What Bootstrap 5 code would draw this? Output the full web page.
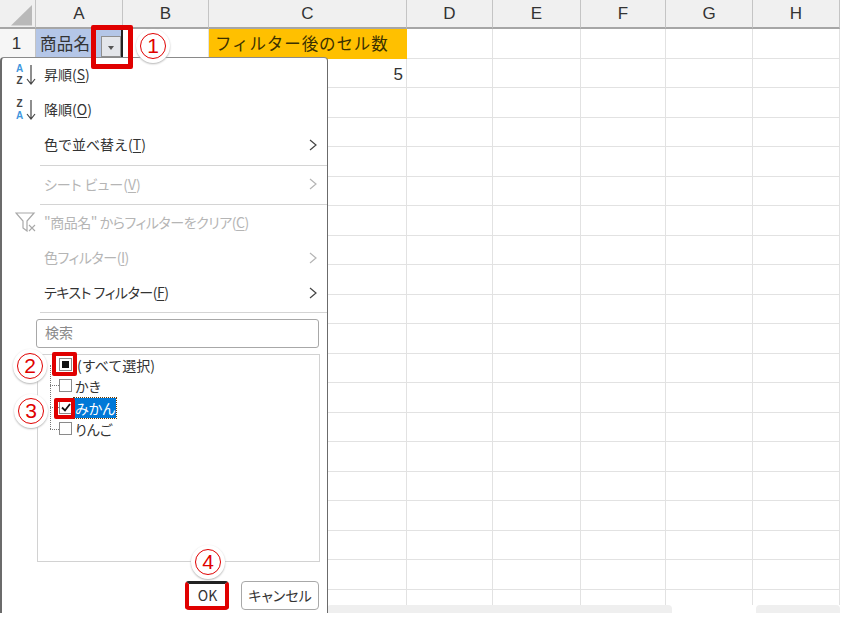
<!DOCTYPE html>
<html lang="ja">

<head>
    <meta charset="UTF-8" />
    <meta name="viewport" content="width=device-width, initial-scale=1.0" />
    <title>フィルター</title>
    <link href="https://cdn.jsdelivr.net/npm/bootstrap@5.3.0/dist/css/bootstrap.min.css" rel="stylesheet" />
    <style>
        body {
            background: #fff;
            font-family: "Noto Sans CJK JP", "Liberation Sans", sans-serif;
            overflow: hidden;
        }

        .stage {
            position: relative;
            width: 850px;
            height: 624px;
        }

        .sheet {
            display: grid;
            grid-template-columns: 36px 87px 86px 198px 86px 88px 85px 87px 87px;
            grid-template-rows: 29px;
            grid-auto-rows: 29.5px;
            width: 840px;
            height: 605px;
            overflow: hidden;
        }

        .hcell {
            background: #f0f0f0;
            border-right: 1px solid #c4c4c4;
            border-bottom: 2px solid #a6a6a6;
            color: #333;
            font: 17px "Liberation Sans", sans-serif;
            text-align: center;
            line-height: 27px;
        }

        .corner {
            position: relative;
            border-right: 1px solid #c4c4c4;
        }

        .corner svg {
            display: block;
        }

        .gcell {
            border-right: 1px solid #e2e2e2;
            border-bottom: 1px solid #e2e2e2;
            color: #333;
            font-size: 16px;
            line-height: 28px;
        }

        .rowhead {
            background: #f6f6f6;
            border-right: 1px solid #c4c4c4;
            font: 17px/30px "Liberation Sans", sans-serif;
            text-align: center;
            padding-right: 2px;
            color: #333;
        }

        .name-cell {
            background: #b4c6e7;
            border-right: 2px solid #222;
            padding-left: 4px;
            font-size: 16.5px;
            color: #333;
            letter-spacing: .3px;
            line-height: 29px;
        }

        .head-cell {
            background: #ffc000;
            border: 0;
            padding-left: 6px;
            font-size: 16.5px;
            letter-spacing: .9px;
            color: #3a3000;
            line-height: 29px;
        }

        .num-cell {
            font: 17px/31px "Liberation Sans", sans-serif;
            text-align: right;
            padding-right: 3px;
        }

        .filter-btn {
            position: absolute;
            left: 101px;
            top: 36px;
            width: 20px;
            height: 21px;
            background: #e4e6ea;
            border: 1px solid #8f8f8f;
        }

        .filter-btn::after {
            content: "";
            position: absolute;
            left: 6px;
            top: 9px;
            border: 3.5px solid transparent;
            border-top: 4px solid #555;
            border-bottom: 0;
        }

        .hscroll {
            height: 8px;
        }

        .thumb-a {
            width: 345px;
            margin-left: 327px;
        }

        .thumb-b {
            width: 84px;
            margin-left: 84px;
        }

        .thumb-a,
        .thumb-b {
            background: #efefef;
            border-radius: 4px 4px 0 0;
        }

        /* filter menu */
        .filter-menu.dropdown-menu {
            position: absolute;
            display: block;
            left: 0;
            top: 57px;
            width: 328px;
            height: 556px;
            min-width: 0;
            padding: 0;
            margin: 0;
            background: #fff;
            border: 0;
            border-left: 2px solid #6b6b6b;
            border-right: 1px solid #6b6b6b;
            border-top: 1px solid #8a8a8a;
            border-radius: 4px 4px 0 0;
            font-size: 14px;
        }

        .menu-row {
            display: flex;
            align-items: center;
            height: 35px;
            padding: 0 10px 2px 0;
            color: #333;
            white-space: nowrap;
        }

        .menu-row.tall {
            height: 36px;
        }

        .menu-row.off {
            color: #b5b5b5;
        }

        .menu-icon {
            flex: 0 0 42px;
            display: flex;
            padding-left: 13px;
            align-items: center;
        }

        .menu-label {
            flex: 1 1 auto;
        }

        .menu-label u {
            text-underline-offset: 2px;
        }

        .tight {
            font-feature-settings: "palt";
            letter-spacing: -.45px;
        }

        .kana {
            font-feature-settings: "palt";
        }

        .sort-letters {
            display: flex;
            flex-direction: column;
            font: bold 10px/11.5px "Liberation Sans", sans-serif;
            color: #444;
            width: 9px;
            margin-right: 2px;
            text-align: center;
        }

        .sort-letters b {
            color: #3f97de;
        }

        .menu-sep {
            height: 1px;
            margin: 1px 0 1px 38px;
            background: #d4d4d4;
        }

        .menu-sep.first {
            margin-top: 2px;
        }

        .menu-sep.flush {
            margin-bottom: 0;
        }

        .search-box.form-control {
            width: 283px;
            height: 29px;
            margin: 6px 0 0 34px;
            padding: 0 8px 3px;
            border: 1px solid #a8a8a8;
            border-radius: 3px;
            font-size: 14px;
            color: #777;
        }

        .search-box.form-control::placeholder {
            color: #8a8a8a;
        }

        .tree-box {
            position: relative;
            width: 283px;
            height: 208px;
            margin: 6px 0 0 35px;
            border: 1px solid #d2d2d2;
            font-size: 14px;
            color: #333;
        }

        .tree-row {
            position: absolute;
            left: 21px;
            height: 21px;
            display: flex;
            align-items: center;
            gap: 3px;
            line-height: 20px;
        }

        .tick {
            width: 13px;
            height: 13px;
            flex: none;
            background: #fff;
            border: 1px solid #8a8a8a;
            display: flex;
            align-items: center;
            justify-content: center;
        }

        .tick-mixed::after {
            content: "";
            width: 7px;
            height: 7px;
            background: #111;
        }

        .tick-label.all-label {
            margin-left: 2px;
        }

        .tick-label.picked {
            background: #0078d7;
            color: #fff;
            outline: 1px dotted #6b3b00;
            padding: 0 1px;
            margin-left: -1px;
        }

        .tree-line {
            position: absolute;
            border-color: #777;
            border-style: dotted;
            border-width: 0;
        }

        .tree-v {
            left: 12px;
            top: 10px;
            height: 64px;
            border-left-width: 1px;
        }

        .tree-h {
            left: 12px;
            width: 9px;
            border-top-width: 1px;
        }

        .menu-actions {
            display: flex;
            justify-content: flex-end;
            gap: 12px;
            margin: 19px 8px 0 0;
        }

        .menu-actions .btn {
            height: 29px;
            padding: 0;
            background: #fff;
            border: 1px solid #a8a8a8;
            border-radius: 4px;
            color: #333;
            font-size: 14px;
            line-height: 27px;
        }

        .ok-btn {
            width: 43px;
        }

        .cancel-btn {
            width: 78px;
            font-feature-settings: "palt";
        }

        /* red annotations */
        .red-frame {
            position: absolute;
            border: 5px solid #e00000;
            border-radius: 2px;
            z-index: 1100;
        }

        .frame-one {
            left: 91px;
            top: 25px;
            width: 42px;
            height: 44px;
        }

        .frame-two {
            left: 52px;
            top: 352px;
            width: 25px;
            height: 24px;
            border-width: 4px;
        }

        .frame-three {
            left: 54px;
            top: 398px;
            width: 21px;
            height: 21px;
            border-width: 4px;
        }

        .frame-four {
            left: 185px;
            top: 581px;
            width: 44px;
            height: 29px;
            border-width: 4px;
            border-top-width: 3px;
            border-top-color: #222;
            border-radius: 4px;
        }

        .callout {
            position: absolute;
            width: 34px;
            height: 34px;
            display: flex;
            align-items: center;
            justify-content: center;
            background: #fff;
            border-radius: 50%;
            box-shadow: 0 1px 2px #b5b5b5;
            z-index: 1101;
        }

        .callout span {
            width: 26px;
            height: 26px;
            border: 1.5px solid #e00000;
            border-radius: 50%;
            color: #e00000;
            text-align: center;
            font: 300 21px/23px "Liberation Sans", sans-serif;
        }
    </style>
</head>

<body>
    <div class="stage">
        <div class="sheet" id="sheet"></div>
        <div class="hscroll d-flex">
            <div class="thumb-a"></div>
            <div class="thumb-b"></div>
        </div>

        <div class="filter-btn"></div>

        <div class="filter-menu dropdown-menu">
            <div class="menu-row">
                <div class="menu-icon">
                    <div class="sort-letters"><b>A</b><span>Z</span></div>
                    <svg width="10" height="20" viewBox="0 0 10 20"><path d="M5 0V19M1 14l4 5 4-5" fill="none" stroke="#444" stroke-width="1.2"/></svg>
                </div>
                <div class="menu-label">昇順(<u>S</u>)</div>
            </div>
            <div class="menu-row">
                <div class="menu-icon">
                    <div class="sort-letters"><span>Z</span><b>A</b></div>
                    <svg width="10" height="20" viewBox="0 0 10 20"><path d="M5 0V19M1 14l4 5 4-5" fill="none" stroke="#444" stroke-width="1.2"/></svg>
                </div>
                <div class="menu-label">降順(<u>O</u>)</div>
            </div>
            <div class="menu-row">
                <div class="menu-icon"></div>
                <div class="menu-label">色で並べ替え(<u>T</u>)</div>
                <svg width="8" height="12" viewBox="0 0 8 12"><path d="M1 1l6 5-6 5" fill="none" stroke="#444" stroke-width="1.2"/></svg>
            </div>
            <div class="menu-sep first"></div>
            <div class="menu-row tall off">
                <div class="menu-icon"></div>
                <div class="menu-label kana">シート ビュー(<u>V</u>)</div>
                <svg width="8" height="12" viewBox="0 0 8 12"><path d="M1 1l6 5-6 5" fill="none" stroke="#b5b5b5" stroke-width="1.2"/></svg>
            </div>
            <div class="menu-sep flush"></div>
            <div class="menu-row tall off">
                <div class="menu-icon">
                    <svg width="22" height="20" viewBox="0 0 22 20"><path d="M1 1H19L12 9V19L8 16V9Z" fill="none" stroke="#a8a8a8" stroke-width="1.2"/><path d="M14 13l6 6M20 13l-6 6" stroke="#a8a8a8" stroke-width="1.1"/></svg>
                </div>
                <div class="menu-label tight">"商品名" からフィルターをクリア(<u>C</u>)</div>
            </div>
            <div class="menu-row off">
                <div class="menu-icon"></div>
                <div class="menu-label tight">色フィルター(<u>I</u>)</div>
                <svg width="8" height="12" viewBox="0 0 8 12"><path d="M1 1l6 5-6 5" fill="none" stroke="#b5b5b5" stroke-width="1.2"/></svg>
            </div>
            <div class="menu-row">
                <div class="menu-icon"></div>
                <div class="menu-label tight">テキスト フィルター(<u>F</u>)</div>
                <svg width="8" height="12" viewBox="0 0 8 12"><path d="M1 1l6 5-6 5" fill="none" stroke="#444" stroke-width="1.2"/></svg>
            </div>
            <div class="menu-sep"></div>

            <input class="search-box form-control" type="text" placeholder="検索" />

            <div class="tree-box">
                <div class="tree-line tree-v"></div>
                <div class="tree-line tree-h" style="top: 30px"></div>
                <div class="tree-line tree-h" style="top: 52px"></div>
                <div class="tree-line tree-h" style="top: 74px"></div>
                <div class="tree-row" style="top: -1px">
                    <div class="tick tick-mixed"></div><div class="tick-label all-label">(すべて選択)</div>
                </div>
                <div class="tree-row" style="top: 20px">
                    <div class="tick"></div><div class="tick-label kana">かき</div>
                </div>
                <div class="tree-row" style="top: 42px">
                    <div class="tick">
                        <svg width="10" height="9" viewBox="0 0 10 9"><path d="M1 4.5L4 7.5 9 1" fill="none" stroke="#111" stroke-width="1.8"/></svg>
                    </div><div class="tick-label kana picked">みかん</div>
                </div>
                <div class="tree-row" style="top: 63px">
                    <div class="tick"></div><div class="tick-label kana">りんご</div>
                </div>
            </div>

            <div class="menu-actions">
                <button class="btn ok-btn" type="button">OK</button>
                <button class="btn cancel-btn" type="button">キャンセル</button>
            </div>
        </div>

        <div class="red-frame frame-one"></div>
        <div class="red-frame frame-two"></div>
        <div class="red-frame frame-three"></div>
        <div class="red-frame frame-four"></div>

        <div class="callout" style="left: 136px; top: 29px"><span>1</span></div>
        <div class="callout" style="left: 13px; top: 349px"><span>2</span></div>
        <div class="callout" style="left: 14px; top: 394px"><span>3</span></div>
        <div class="callout" style="left: 191px; top: 545px"><span>4</span></div>
    </div>

    <script>
        const sheet = document.getElementById("sheet");
        const cols = ["A", "B", "C", "D", "E", "F", "G", "H"];

        function addCell(cls, text) {
            const el = document.createElement("div");
            el.className = cls;
            if (text) el.textContent = text;
            sheet.appendChild(el);
            return el;
        }

        // header row
        const corner = addCell("hcell corner");
        corner.innerHTML = '<svg width="35" height="27" viewBox="0 0 35 27"><path d="M11 25.5H32V5Z" fill="#b9b9b9"/></svg>';
        cols.forEach(c => addCell("hcell", c));

        // grid rows
        for (let r = 1; r <= 20; r++) {
            addCell("rowhead", r === 1 ? "1" : "");
            cols.forEach((c, i) => {
                if (r === 1 && i === 0) addCell("gcell name-cell", "商品名");
                else if (r === 1 && i === 2) addCell("gcell head-cell", "フィルター後のセル数");
                else if (r === 2 && i === 2) addCell("gcell num-cell", "5");
                else addCell("gcell");
            });
        }
    </script>
</body>

</html>
